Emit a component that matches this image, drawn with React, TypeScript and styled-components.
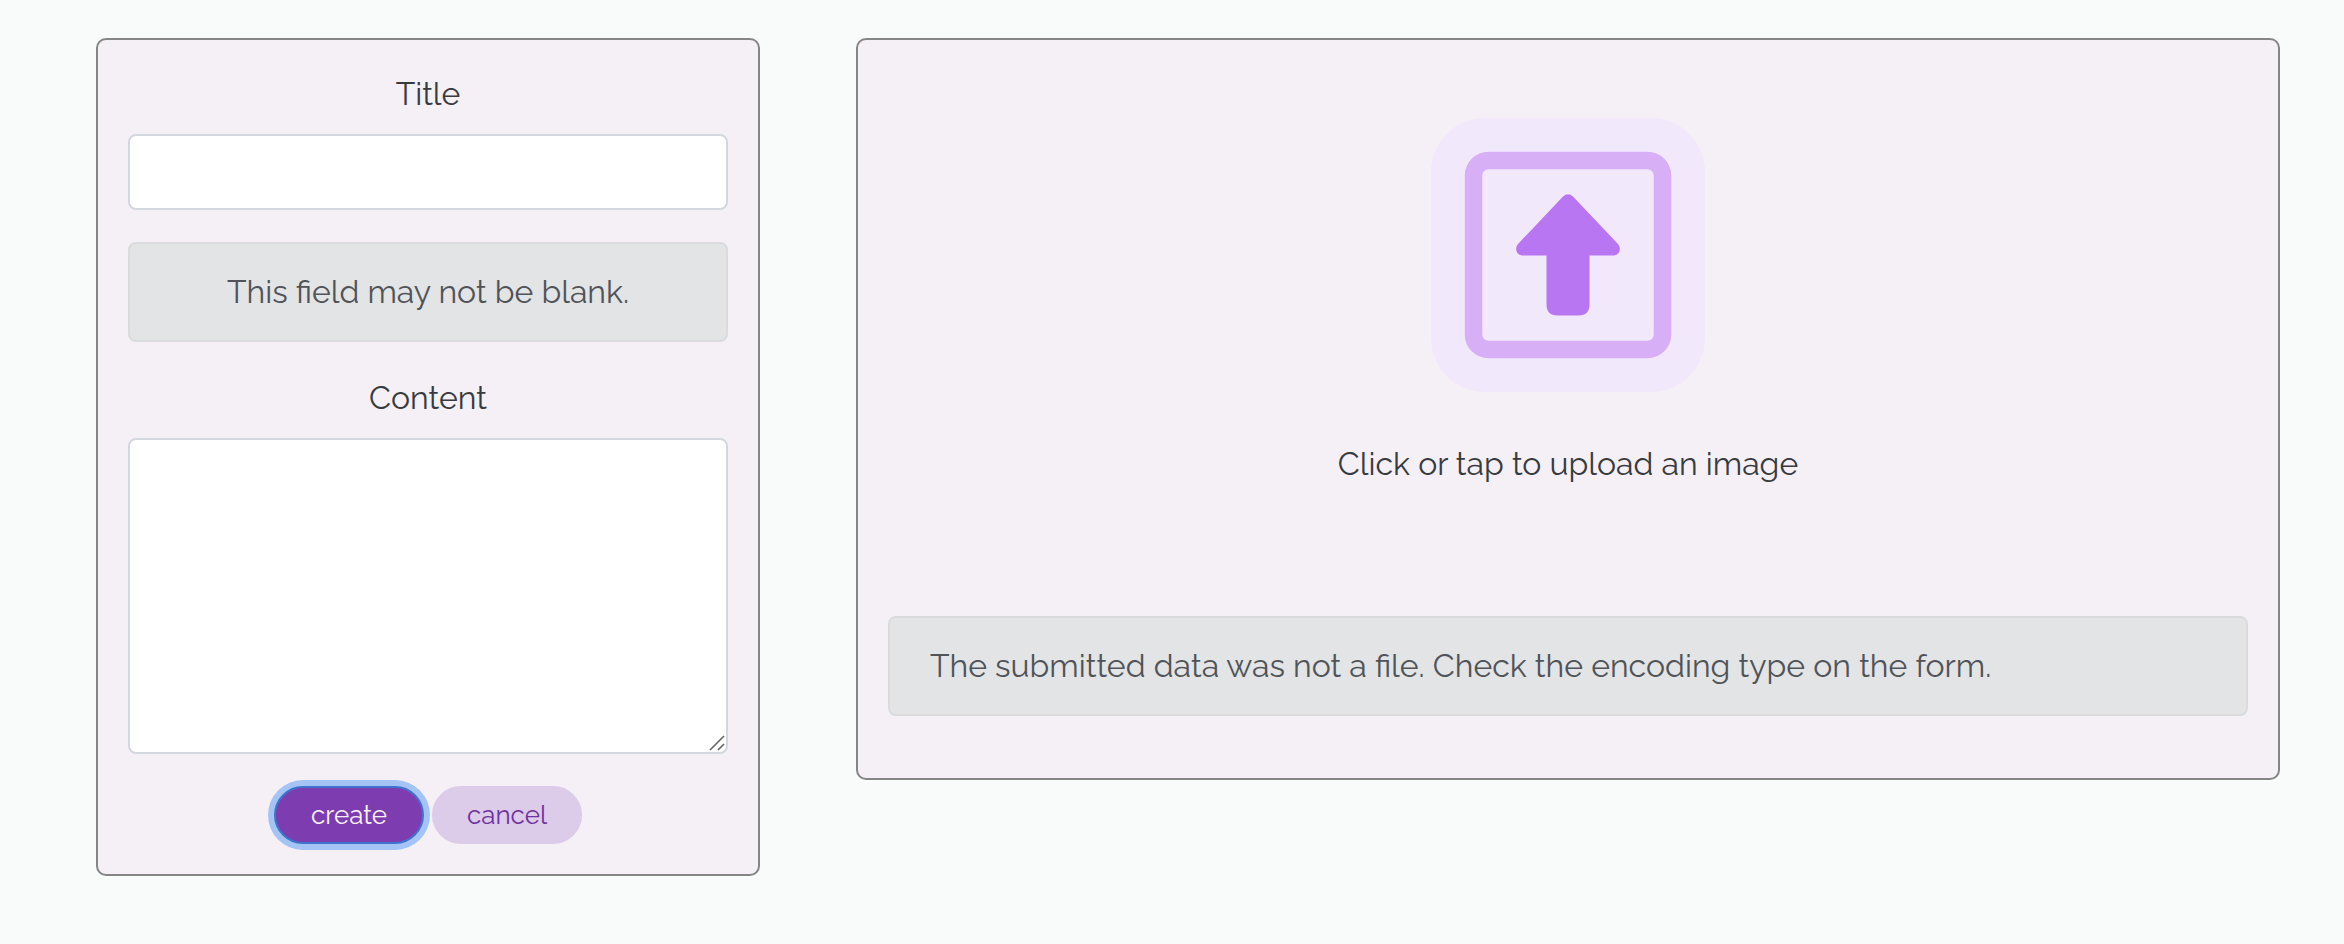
import React from "react";
import styled, { createGlobalStyle } from "styled-components";

const GlobalStyle = createGlobalStyle`
  *, *::before, *::after { box-sizing: border-box; }
  body {
    margin: 0;
    background: #f9fbfa;
    color: #212529;
    font-family: Raleway, Lato, "Open Sans", sans-serif;
    font-size: 32px;
    font-weight: 400;
    line-height: 48px;
  }
`;

const PostForm = styled.form`
  display: grid;
  grid-template-columns: 83fr 178fr;
  align-items: start;
  gap: 96px;
  padding: 38px 64px 38px 96px;
`;

const Card = styled.section`
  display: flex;
  flex-direction: column;
  gap: 32px;
  min-width: 0;
  padding: 30px;
  border: 2px solid #858585;
  border-radius: 10px;
  background: #f5eff6;
`;

const UploadCard = styled(Card)`
  position: relative;
  padding-bottom: 62px;
`;

const Field = styled.div`
  display: flex;
  flex-direction: column;
  gap: 16px;
  text-align: center;
`;

const FieldLabel = styled.label`
  color: #373b3f;
`;

const TextInput = styled.input`
  width: 100%;
  height: 76px;
  padding: 12px 24px;
  border: 2px solid #d1d8dd;
  border-radius: 8px;
  background: #fff;
  color: inherit;
  font: inherit;
`;

const TextAreaFrame = styled.div`
  position: relative;
  display: flex;
`;

const TextArea = styled.textarea`
  width: 100%;
  height: 316px;
  padding: 12px 24px;
  border: 2px solid #d1d8dd;
  border-radius: 8px;
  background: #fff;
  color: inherit;
  font: inherit;
  resize: none;
`;

const ResizeGrip = styled.svg`
  position: absolute;
  right: 3px;
  bottom: 3px;
  width: 16px;
  height: 16px;
  pointer-events: none;
`;

const Alert = styled.div<{ $align?: "left" | "center" }>`
  padding: 24px 40px;
  border: 2px solid #d9dbdd;
  border-radius: 8px;
  background: #e3e4e6;
  color: #505357;
  text-align: ${({ $align = "left" }) => $align};
`;

const Actions = styled.div`
  display: flex;
  justify-content: center;
  gap: 8px;
`;

const PillButton = styled.button<{ $primary?: boolean }>`
  width: 150px;
  height: 58px;
  padding: 0;
  border: 2px solid ${({ $primary }) => ($primary ? "#7e3cb1" : "#dccbe9")};
  border-radius: 29px;
  background: ${({ $primary }) => ($primary ? "#7e3cb1" : "#dccbe9")};
  color: ${({ $primary }) => ($primary ? "#f8f2fc" : "#6f32a0")};
  font: inherit;
  font-size: 26px;
  line-height: 38px;
  cursor: pointer;

  &:focus {
    outline: none;
    border-color: #3f72cc;
    box-shadow: 0 0 0 6px #a5c4f6;
  }
`;

const UploadLabel = styled.label`
  display: flex;
  flex-direction: column;
  align-items: center;
  gap: 48px;
  padding: 48px 0 96px;
  color: #373b3f;
  text-align: center;
  cursor: pointer;
`;

const UploadIcon = styled.svg`
  width: 274px;
  height: 274px;
`;

const HiddenFile = styled.input`
  position: absolute;
  width: 1px;
  height: 1px;
  opacity: 0;
`;

export default function App() {
  return (
    <>
      <GlobalStyle />
      <PostForm onSubmit={(event) => event.preventDefault()}>
        <Card>
          <Field>
            <FieldLabel htmlFor="title">Title</FieldLabel>
            <TextInput id="title" name="title" type="text" />
          </Field>
          <Alert role="alert" $align="center">This field may not be blank.</Alert>
          <Field>
            <FieldLabel htmlFor="content">Content</FieldLabel>
            <TextAreaFrame>
              <TextArea id="content" name="content" />
              <ResizeGrip viewBox="0 0 16 16" aria-hidden="true">
                <path d="M1 15L15 1M9 15L15 9" stroke="#666" strokeWidth="1.6" fill="none" />
              </ResizeGrip>
            </TextAreaFrame>
          </Field>
          <Actions>
            <PillButton type="submit" $primary autoFocus>create</PillButton>
            <PillButton type="button">cancel</PillButton>
          </Actions>
        </Card>

        <UploadCard>
          <UploadLabel htmlFor="image">
            <UploadIcon viewBox="0 0 274 274" aria-hidden="true">
              <rect width="274" height="274" rx="54" fill="#f2e8fc" />
              <rect x="42.5" y="42.5" width="189" height="189" rx="15" fill="none" stroke="#d6aff7" strokeWidth="17.5" />
              <path
                d="M132 78.5Q137 74 142 78.5L187 126C191 131 188 137.5 182 137.5H158.5V186.5Q158.5 197.5 147.5 197.5H126.5Q115.5 197.5 115.5 186.5V137.5H92C86 137.5 83 131 87 126Z"
                fill="#b876f2"
              />
            </UploadIcon>
            Click or tap to upload an image
          </UploadLabel>
          <HiddenFile id="image" name="image" type="file" accept="image/*" />
          <Alert role="alert">
            The submitted data was not a file. Check the encoding type on the form.
          </Alert>
        </UploadCard>
      </PostForm>
    </>
  );
}
